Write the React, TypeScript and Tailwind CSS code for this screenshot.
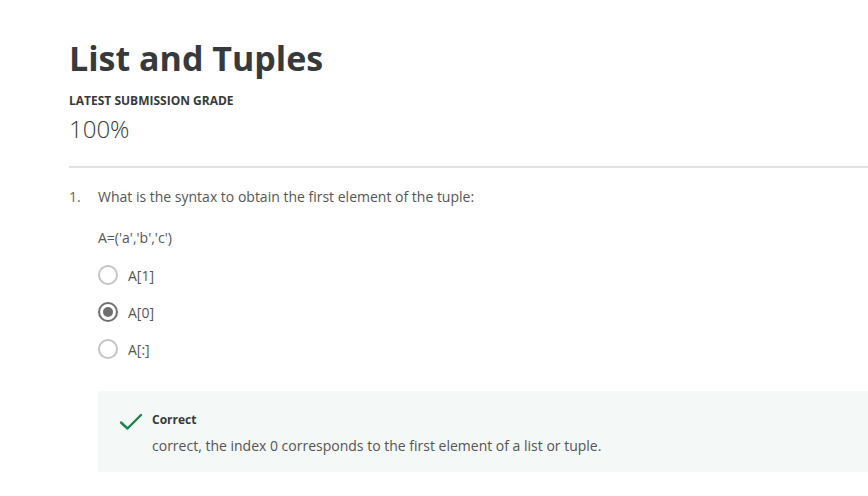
import React from "react";

const font = { fontFamily: '"Open Sans", "Noto Sans", sans-serif' };

function Radio({ checked, label }: { checked?: boolean; label: string }) {
  return (
    <div className="flex items-center h-[20px]">
      <span
        className={
          "w-[20px] h-[20px] rounded-full border-2 flex items-center justify-center shrink-0 " +
          (checked ? "border-[#6f6f6f]" : "border-[#c4c4c4]")
        }
      >
        {checked && <span className="w-[10px] h-[10px] rounded-full bg-[#6f6f6f]" />}
      </span>
      <span className="ml-[10px] text-[14px] text-[#555]">{label}</span>
    </div>
  );
}

export default function App() {
  return (
    <div className="w-[868px] h-[496px] bg-white overflow-hidden" style={font}>
      <div className="pl-[69px] pt-[34px]">
        <h1 className="text-[34px] leading-[48px] font-bold text-[#373a3c]">List and Tuples</h1>
        <div className="mt-[11px] text-[12px] leading-[16px] font-bold text-[#373a3c]">
          LATEST SUBMISSION GRADE
        </div>
        <div className="mt-[4px] text-[24px] leading-[32px] font-light text-[#373a3c]">100%</div>
        <div className="mt-[21px] h-[2px] bg-[#e1e1e1]" />

        <div className="mt-[17px] flex">
          <div className="w-[29px] text-[14px] leading-[24px] text-[#666]">1.</div>
          <div className="flex-1">
            <div className="text-[14px] leading-[24px] text-[#555]">
              What is the syntax to obtain the first element of the tuple:
            </div>
            <div className="mt-[17px] text-[14px] leading-[24px] text-[#555]">A=('a','b','c')</div>
            <div className="mt-[15px] flex flex-col gap-[17px]">
              <Radio label="A[1]" />
              <Radio checked label="A[0]" />
              <Radio label="A[:]" />
            </div>
            <div className="mt-[32px] h-[81px] bg-[#f4f8f7] flex pl-[21px] pt-[21px]">
              <svg width="24" height="18" viewBox="0 0 24 18" className="mt-[1px] shrink-0">
                <path d="M2 9.5 L8.5 15.5 L22 2" fill="none" stroke="#1f8354" strokeWidth="2.4" strokeLinecap="round" strokeLinejoin="round" />
              </svg>
              <div className="ml-[9px]">
                <div className="text-[12px] leading-[16px] font-bold text-[#373a3c]">Correct</div>
                <div className="mt-[8px] text-[14px] leading-[20px] text-[#555]">
                  correct, the index 0 corresponds to the first element of a list or tuple.
                </div>
              </div>
            </div>
          </div>
        </div>
      </div>
    </div>
  );
}
